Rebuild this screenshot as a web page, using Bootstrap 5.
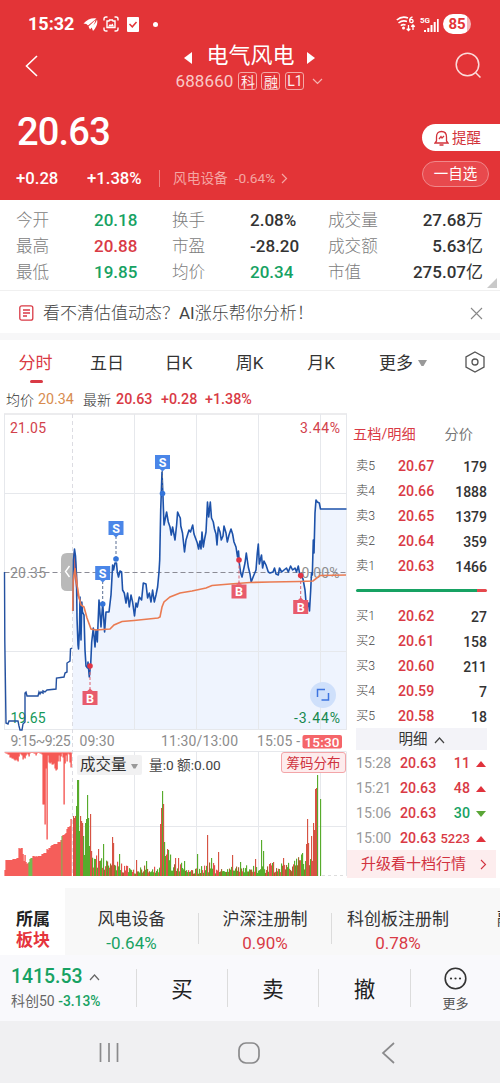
<!DOCTYPE html>
<html lang="zh-CN">
<head>
<meta charset="utf-8">
<meta name="viewport" content="width=device-width, initial-scale=1">
<title>电气风电 688660</title>
<link href="https://cdn.jsdelivr.net/npm/bootstrap@5.3.0/dist/css/bootstrap.min.css" rel="stylesheet">
<style>
:root{--up:#d93a45;--down:#17a263;--brand:#e33437}
body{font-family:Roboto,"Noto Sans CJK SC",sans-serif;color:#333;width:500px;height:1083px;overflow:hidden;background:#fff;line-height:1}
svg{display:block;flex:none}
.up{color:var(--up)}.down{color:var(--down)}
.fw5{font-weight:500}
.cjk{font-weight:400}
.nowrap{white-space:nowrap}
.hero{background:var(--brand);height:200px;color:#fff}
.statusbar{height:40px;padding:8px 28px 0}
.clock{font-size:18px;font-weight:700;width:46px}
.battery{color:var(--brand);border-radius:10px;width:28px;height:20px;font-size:15px;font-weight:700;background:linear-gradient(90deg,#fff 84%,#f5b5b6 84%)}
.titlebar{height:58px}
.stockname{font-size:22px;line-height:24px;height:25px}
.stockname span{padding-top:1px}
.code{font-size:17px;line-height:22px;height:22px;color:#f9c9c6;letter-spacing:.1px}
.tagbox{border:1px solid #f3a9a6;border-radius:3px;width:19px;height:18px;font-size:14px;padding-top:2px;color:#fdeeee}
.price{font-size:38px;font-weight:500;letter-spacing:-.8px;height:63px}
.change{padding-left:16px;height:26px;font-size:16.7px}
.change>span{padding-top:10px}
.change .parent{margin-left:13px;font-size:13.7px;color:#f4a6a3}
.change .divider{width:1px;height:17px;background:#ee8081;margin-top:9px;padding:0}
.pill-remind{background:#fff;color:#d2323a;width:78px;height:27px;border-radius:14px 0 0 14px;font-size:14.5px;margin-top:13px;padding-left:12px}
.change .pill-fav{border:1px solid #f0888a;background:#e8494d;width:67px;height:26px;border-radius:13px;font-size:14.5px;margin-right:11px;padding-top:2px}
.stats{height:91px;padding:7px 17px 0 16px;font-size:16.6px;border-bottom:1px solid #f0f0f0;position:relative}
.statrow{height:26px}
.statrow>*{width:78px}
.statrow>:last-child{width:auto}
.statrow>:nth-child(odd){color:#7c7c7c;font-weight:300;padding-top:2px}
.statrow>:nth-child(even){font-weight:500;font-size:17px}
.notice{height:42px;padding:2px 17px 0 19px;font-size:17px;font-weight:300;color:#444}
.tabs{height:47px;font-size:17px}
.tabs>div{height:44px;position:relative;padding-top:2px}
.tabs .active{color:var(--up)}
.tabs .active::after{content:"";position:absolute;left:50%;margin-left:-6px;bottom:1px;width:13px;height:3px;border-radius:2px;background:#d93a45}
.summary{height:25px;margin-bottom:1px;font-size:14.3px;padding-left:6px}
.avg{color:#d88c50}
.main{height:475px}
.chartwrap{width:347px;height:464px;position:relative}
.volsel{position:absolute;left:77px;top:342px;width:65px;height:20px;background:#f1f1f2;border-radius:2px;font-size:15.5px;padding:2px 0 0 3px}
.volinfo{position:absolute;left:149px;top:343px;font-size:13.7px;line-height:18px;color:#444}
.chips{position:absolute;left:281px;top:339px;width:65px;height:21px;border:1px solid #f3a5a8;border-radius:3px;background:#fdeced;color:#cf3340;font-size:13.5px;padding-top:2px}
.book{width:149px}
.bookhead{height:41px;font-size:14.2px;padding:2px 23px 0 6px}
.level{height:25px;padding:0 9px}
.level .lab{width:42px;font-size:12.3px;color:#444;font-weight:300}
.level .quote{font-size:14.2px;font-weight:500;color:var(--up)}
.level .qty{margin-left:auto;font-size:14px;font-weight:500}
.balance{height:25px;padding:0 9px 2px}
.balance div{height:3px;border-radius:2px;background:linear-gradient(90deg,#17a263 92%,#e5484d 92%)}
.detailhead{height:22px;margin:-1px 9px 0;padding-top:2px;background:#f3f3f8;font-size:14.5px}
.tick{height:25px;padding:2px 0 0 9px;font-size:14.2px}
.tick .t{color:#999;width:44px}
.tick .p{width:37px;font-weight:500;color:var(--up)}
.tick .q{font-weight:500;width:33px;text-align:right}
.upgrade{height:28px;background:#fdedee;color:#d2323f;font-size:15px;padding:1px 9px 0 14px}
.sectors{height:67px;background:#f8f8f8}
.sectors>*{flex:none}
.sectitle{width:65px;background:#fff;font-size:17px;font-weight:700;line-height:21px;padding:21px 0 0 16px;color:#222}
.sector{font-size:17px;line-height:24px;padding-top:19px}
.vline{width:1px;background:#dcdcdc;height:38px}
.sectors .vline{height:31px;margin-top:25px}
.trade{height:66px;background:#f9f9fc}
.tradebtn{font-size:21.5px;color:#222;padding-top:4px}
.sysnav{height:62px;background:#f0f0f2}
</style>
</head>
<body>
<header class="hero">
  <div class="statusbar d-flex align-items-start">
    <div class="d-flex align-items-center" style="height:32px">
      <span class="clock">15:32</span>
      <svg style="margin-left:9px" width="15" height="15" viewBox="0 0 15 15" fill="#fff"><path d="M.5 6.500Q6 .5 13.500 1.500L5 8.500Q4 6.500 .5 6.500zM14 2.500Q15.500 8 10 14L8.500 10Q13 6 14 2.500zM12.500 3Q12 7 7 12.500L5.500 9.500z"/></svg>
      <svg style="margin-left:5px" width="16" height="16" viewBox="0 0 16 16" fill="none" stroke="#fff" stroke-width="1.400"><path d="M1 4.500V3Q1 1 3 1H4.500M11.500 1H13Q15 1 15 3V4.500M15 11.500V13Q15 15 13 15H11.500M4.500 15H3Q1 15 1 13V11.500M4 5H6L6.500 4H9.500L10 5H12V11.500H4z"/><path d="M5 10.500L7 8L8 9L9.500 7.500L11 10.500z" fill="#fff" stroke="none"/></svg>
      <svg style="margin-left:8px" width="12" height="15" viewBox="0 0 12 15"><rect width="12" height="15" rx="1" fill="#fff"/><path d="M2.500 7L5.300 9.800L9.500 5" fill="none" stroke="#e33437" stroke-width="1.500"/></svg>
      <svg style="margin-left:14px" width="5" height="5"><circle cx="2.500" cy="2.500" r="2.500" fill="#fff"/></svg>
    </div>
    <div class="d-flex align-items-center ms-auto" style="height:32px">
      <svg width="20" height="16" viewBox="0 0 20 16" fill="none" stroke="#fff" stroke-width="1.600"><path d="M.8 4Q6 -.5 12 2M2.500 7Q6.500 3.800 11 5.500M4.800 9.700Q7 8 9.500 9"/><circle cx="7.500" cy="12" r=".7" fill="#fff"/><path stroke-width="1.300" d="M12.500 9V14.500M10.700 12.700L12.500 14.500L14.300 12.700M17 14V9M15.200 10.800L17 9L18.800 10.800M16.500 .8Q13.500 2 13.700 4.500"/><circle cx="15.400" cy="5" r="1.700" stroke-width="1.300"/></svg>
      <svg style="margin-left:4px" width="19" height="17" viewBox="0 0 19 17" fill="#fff"><text x="0" y="7" font-size="8" font-weight="700" textLength="10" lengthAdjust="spacingAndGlyphs">5G</text><path d="M4 14h2v2H4zM7.300 12h2v4h-2zM10.500 9h2v7h-2zM13.700 6h2v10h-2zM17 3h1.700v13H17z"/></svg>
      <span class="battery d-flex align-items-center justify-content-center" style="margin-left:4px;margin-right:1px">85</span>
    </div>
  </div>
  <div class="titlebar d-flex">
    <svg style="margin:15px 0 0 25px" width="13" height="22" viewBox="0 0 13 22" fill="none" stroke="#fff" stroke-width="1.600"><path d="M12 1L1.500 11L12 21"/></svg>
    <div class="mx-auto d-flex flex-column align-items-center" style="padding:3px 0 0 6px">
      <div class="d-flex align-items-center stockname">
        <svg style="margin-top:5px" width="8" height="12" viewBox="0 0 8 12"><path d="M8 0V12L0 6z" fill="#fff"/></svg>
        <span style="margin:0 12px 0 14px">电气风电</span>
        <svg style="margin-top:5px" width="8" height="12" viewBox="0 0 8 12"><path d="M0 0V12L8 6z" fill="#fff"/></svg>
      </div>
      <div class="d-flex align-items-center code" style="margin-top:2px">
        <span>688660</span>
        <span class="tagbox d-flex align-items-center justify-content-center" style="margin-left:5px">科</span>
        <span class="tagbox d-flex align-items-center justify-content-center" style="margin-left:4px">融</span>
        <span class="tagbox d-flex align-items-center justify-content-center" style="margin-left:5px;padding:0">L1</span>
        <svg style="margin-left:8px" width="11" height="7" viewBox="0 0 11 7" fill="none" stroke="#f5b5b2" stroke-width="1.200"><path d="M1 1L5.500 5.500L10 1"/></svg>
      </div>
    </div>
    <svg style="margin:12px 18px 0 0" width="27" height="27" viewBox="0 0 27 27" fill="none" stroke="#fbdcdb" stroke-width="1.500"><circle cx="12.500" cy="12.500" r="11.300"/><path d="M20.500 20.500L25.500 25.500"/></svg>
  </div>
  <div class="d-flex justify-content-between" style="padding:13px 0 0 17px;height:63px">
    <div class="price" style="padding-top:2px">20.63</div>
    <div class="pill-remind d-flex align-items-center">
      <svg width="15" height="16" viewBox="0 0 15 16" fill="none" stroke="#d2323a" stroke-width="1.300"><path d="M2.500 11V7Q2.500 1.500 7.500 1.500T12.500 7V11L14 13H1zM5.500 15H9.500M5 9L7 6.500L8 8L10 6"/></svg>
      <span style="margin-left:3px;padding-top:3px">提醒</span>
    </div>
  </div>
  <div class="change d-flex align-items-center">
    <span class="fw5" style="width:71px">+0.28</span>
    <span class="fw5" style="width:72px">+1.38%</span>
    <span class="divider"></span>
    <span class="parent nowrap">风电设备&ensp;-0.64%</span>
    <svg style="margin:9px 0 0 6px" width="7" height="11" viewBox="0 0 7 11" fill="none" stroke="#f4a6a3" stroke-width="1.200"><path d="M1 1L5.500 5.500L1 10"/></svg>
    <span class="pill-fav d-flex align-items-center justify-content-center ms-auto">一自选</span>
  </div>
</header>

<section class="stats">
  <div class="statrow d-flex align-items-center"><span>今开</span><span class="down">20.18</span><span>换手</span><span>2.08%</span><span>成交量</span><span class="ms-auto">27.68<span class="cjk">万</span></span></div>
  <div class="statrow d-flex align-items-center"><span>最高</span><span class="up">20.88</span><span>市盈</span><span>-28.20</span><span>成交额</span><span class="ms-auto">5.63<span class="cjk">亿</span></span></div>
  <div class="statrow d-flex align-items-center"><span>最低</span><span class="down">19.85</span><span>均价</span><span class="down">20.34</span><span>市值</span><span class="ms-auto">275.07<span class="cjk">亿</span></span></div>
  <svg class="position-absolute" style="right:3px;bottom:2px" width="10" height="10"><path d="M10 0V10H0z" fill="#c9c9c9"/></svg>
</section>
<section class="notice d-flex align-items-center">
  <svg width="15" height="16" viewBox="0 0 15 16" fill="none" stroke="#d93a45" stroke-width="1.300"><rect x=".8" y=".8" width="13" height="14.400" rx="2"/><path d="M4 5H11M4 8H11M4 11H8"/></svg>
  <span style="margin-left:9px;padding-top:1px">看不清估值动态？<span class="cjk">AI</span>涨乐帮你分析！</span>
  <svg class="ms-auto" width="13" height="13" viewBox="0 0 13 13" stroke="#888" stroke-width="1.100"><path d="M1 1L12 12M12 1L1 12"/></svg>
</section>
<div style="height:7px;background:#f7f7f8"></div>
<nav class="tabs d-flex">
  <div class="active d-flex align-items-center justify-content-center" style="width:71px">分时</div>
  <div class="d-flex align-items-center justify-content-center" style="width:72px">五日</div>
  <div class="d-flex align-items-center justify-content-center" style="width:71px">日K</div>
  <div class="d-flex align-items-center justify-content-center" style="width:71px">周K</div>
  <div class="d-flex align-items-center justify-content-center" style="width:72px">月K</div>
  <div class="d-flex align-items-center" style="padding-left:22px;width:108px">更多<svg style="margin-left:5px" width="9" height="7"><path d="M0 0H9L5.500 6H3.500z" fill="#999"/></svg></div>
  <div class="d-flex align-items-center" style="padding:0"><svg width="20" height="22" viewBox="0 0 20 22" fill="none" stroke="#555" stroke-width="1.300"><path d="M10 1L19 6V16L10 21L1 16V6z"/><circle cx="10" cy="11" r="3"/></svg></div>
</nav>
<div class="summary d-flex align-items-center nowrap">
  <span style="width:32px;font-size:14px;font-weight:300">均价</span><span class="avg" style="width:45px">20.34</span><span style="width:33px;font-size:14px;font-weight:300">最新</span><span class="up fw5" style="width:45px">20.63</span><span class="up fw5" style="width:44px">+0.28</span><span class="up fw5">+1.38%</span>
</div>

<main class="main d-flex">
  <div class="chartwrap">
    <svg id="chart" width="347" height="464" viewBox="0 413 347 464"></svg>
    <div class="volsel d-flex align-items-center">成交量<svg style="margin-left:4px" width="7" height="5"><path d="M0 0H7L4.500 4.500H2.500z" fill="#999"/></svg></div>
    <div class="volinfo">量:0 额:0.00</div>
    <div class="chips d-flex align-items-center justify-content-center">筹码分布</div>
  </div>
  <aside class="book d-flex flex-column">
    <div class="bookhead d-flex align-items-center justify-content-between"><span class="up">五档/明细</span><span style="color:#777">分价</span></div>
    <div id="asks"></div>
    <div class="balance d-flex align-items-center"><div class="w-100"></div></div>
    <div id="bids"></div>
    <div class="detailhead d-flex align-items-center justify-content-center">明细<svg style="margin-left:6px" width="11" height="7" viewBox="0 0 11 7" fill="none" stroke="#444" stroke-width="1.200"><path d="M1 6L5.500 1L10 6"/></svg></div>
    <div id="ticks"></div>
    <div class="upgrade d-flex align-items-center">升级看十档行情<svg class="ms-auto" width="7" height="11" viewBox="0 0 7 11" fill="none" stroke="#d2323f" stroke-width="1.100"><path d="M1 1L5.500 5.500L1 10"/></svg></div>
  </aside>
</main>

<section class="sectors d-flex overflow-hidden nowrap">
  <div class="sectitle">所属<br><span style="color:#e5343c">板块</span></div>
  <div class="sector text-center" style="width:133px">风电设备<br><span class="down">-0.64%</span></div>
  <div class="vline"></div>
  <div class="sector text-center" style="width:132px">沪深注册制<br><span class="up">0.90%</span></div>
  <div class="vline"></div>
  <div class="sector text-center" style="width:132px">科创板注册制<br><span class="up">0.78%</span></div>
  <div class="sector" style="padding-left:33px">融</div>
</section>
<section class="trade d-flex align-items-center">
  <div style="width:136px;padding-left:11px" class="nowrap">
    <div class="d-flex align-items-center down fw5" style="font-size:19.400px;height:26px">1415.53<svg style="margin-left:6px" width="11" height="7" viewBox="0 0 11 7" fill="none" stroke="#666" stroke-width="1.200"><path d="M1 6L5.500 1L10 6"/></svg></div>
    <div style="font-size:14px;height:22px;line-height:22px;color:#666">科创50 <span class="down fw5" style="font-size:13.800px">-3.13%</span></div>
  </div>
  <div class="vline"></div><div class="tradebtn text-center" style="width:90px">买</div>
  <div class="vline"></div><div class="tradebtn text-center" style="width:90px">卖</div>
  <div class="vline"></div><div class="tradebtn text-center" style="width:91px">撤</div>
  <div class="vline"></div>
  <div class="d-flex flex-column align-items-center flex-fill">
    <svg width="23" height="23" viewBox="0 0 23 23"><circle cx="11.500" cy="11.500" r="10.300" fill="none" stroke="#333" stroke-width="1.600"/><g fill="#333"><circle cx="7" cy="11.500" r="1.100"/><circle cx="11.500" cy="11.500" r="1.100"/><circle cx="16" cy="11.500" r="1.100"/></g></svg>
    <span style="font-size:13px;color:#555;margin-top:7px">更多</span>
  </div>
</section>
<footer class="sysnav d-flex align-items-center justify-content-between" style="padding:1px 105px 0 99px">
  <svg width="20" height="21" stroke="#8a8a8c" stroke-width="1.700"><path d="M1.500 1V20M10 1V20M18.500 1V20"/></svg>
  <svg width="22" height="22" fill="none" stroke="#8a8a8c" stroke-width="1.700" style="margin-right:2px"><rect x="1" y="1" width="20" height="20" rx="7"/></svg>
  <svg width="14" height="22" fill="none" stroke="#8a8a8c" stroke-width="1.700"><path d="M13 1L2 11L13 21"/></svg>
</footer>

<script src="https://cdn.jsdelivr.net/npm/bootstrap@5.3.0/dist/js/bootstrap.bundle.min.js"></script>
<script>
const byId = id => document.getElementById(id);
const level = ([l, p, q]) => `<div class="level d-flex align-items-center"><span class="lab">${l}</span><span class="quote">${p}</span><span class="qty">${q}</span></div>`;
byId('asks').innerHTML = [['卖5','20.67',179],['卖4','20.66',1888],['卖3','20.65',1379],['卖2','20.64',359],['卖1','20.63',1466]].map(level).join('');
byId('bids').innerHTML = [['买1','20.62',27],['买2','20.61',158],['买3','20.60',211],['买4','20.59',7],['买5','20.58',18]].map(level).join('');
byId('ticks').innerHTML = [['15:28',11,1],['15:21',48,1],['15:06',30,0],['15:00',5223,1]].map(([t, q, u]) =>
  `<div class="tick d-flex align-items-center"><span class="t">${t}</span><span class="p">20.63</span><span class="q ${u ? 'up' : 'down'}"${q > 999 ? ' style="font-size:13px"' : ''}>${q}</span><svg style="margin-left:6px" width="10" height="6"><path d="${u ? 'M0 6L5 0L10 6z' : 'M0 0H10L5 6z'}" fill="${u ? '#e0323c' : '#5aa637'}"/></svg></div>`).join('');

// Call auction line, then the continuous session
const auction = '4.5,572 4.8,640 6,723 8,724 9,721 18,721 19,726 20,730 22,730 23,724 25,722 25,693 26,692 27,696 38,696 39,692 40,694 41,692 43,693 43,691 45,692 47,690 56,689 56.5,678 64,677 65,673 67,672 67,663 70,661 70.5,649 72,648';
const session = '73,611 73.5,560 74.5,549 75.5,556 76.5,575 77,618 78,645 78.5,649 79.5,630 80,597 80.5,610 81,640 81.8,602 82.5,612 84,615 85,650 86,666 87.5,668 88,662 89.3,677 90.7,664 91.7,642 93.3,628 95,647 96,630 97.3,642 99,600 101,627 102.7,603 104.6,632 106,612 109,612 111,595 112,577 112.6,565 113.5,570 115,563 116.5,563 117.3,572 118.5,577 120,571 121.6,572 122.6,590 124.3,593 126,603 127.6,593 129.3,607 131,595 132.6,602 134.5,616 136,603 137.3,607 139.3,597 141.6,600 143.3,583 146,584 147.6,598 149.3,593 151,602 152.6,590 154.3,602 156,595 157.6,587 159,572 159.7,560 160.7,510 162,472 163,497 164,525 165.6,517 166.6,512 168.3,522 170,527 171.3,535 172.6,527 175,540 176.6,525 177.6,512 179.3,516 180.3,518 180.8,526 182.5,533 184.5,552 186,540 189,530 190.5,532 192.7,525 194,534 197.3,543 198.6,549 200,541 201,549 202,532 203.3,547 204.6,539 206,532 207.5,502 208.7,517 210.3,502 211.5,518 213.3,522 214.5,529 216,534 217,545 218.3,527 220,532 221.3,540 223,536 224,526 226,533 227.3,542 229,535 231,529 232.6,534 234,542 236,547 237.5,557 238.5,551 239.3,563 240.7,573 242,577 243.5,570 245,563 246.3,553 248.3,567 250,574 251.2,582 253.5,576 256,570 257.3,553 258.3,544 259.3,564 261.5,555 262.6,568 264,561 266,565 268.3,572 270,573 273,572 274.5,568 276,574 278.3,575 279.5,568 281.7,572 284,570 286.5,568 288.3,572 290.6,566 292.6,570 295,568 296.5,572 298.3,566 299.5,573 303,579 305,590 306.5,608 308.5,603 309.5,611 310.7,590 311.5,573 312.3,575 313.3,540 314,553 315,513 316,500 317.3,502 319.3,503 320.5,509 346.5,509';
const average = '72.7,611 73.2,580 75,568 77,585 79,597 81,605 84,607 87,618 91,629 96,630 110,629 114,625 122,621.5 134,620.5 158,618 160,617 162,607 164,602 170,597 180,593 192,591 206,588 212,585.5 230,584 250,582.5 270,582 300,581.5 313,581 320,575.5 346,575';
const line = (x1, y1, x2, y2, extra = 'stroke="#e6e8ec"') => `<path d="M${x1} ${y1}L${x2} ${y2}" fill="none" ${extra}/>`;
const label = (x, y, s, w, fill, size = 14, extra = '') => `<text x="${x}" y="${y}" font-size="${size}" textLength="${w}" fill="${fill}" ${extra}>${s}</text>`;
let out = `<polygon points="${session} 346.5,729.5 72.5,729.5" fill="#eff4fe"/>`;
out += line(4, 414, 347, 414, 'stroke="#e6e6e8" stroke-width="1.5"');
for (const y of [493.5, 651.5, 729.5, 826.5]) out += line(y > 800 ? 73 : 4.5, y, 346.5, y);
out += line(4.5, 414, 4.5, 730) + line(4.5, 751.5, 346.5, 751.5);
for (const x of [134.5, 196.5, 258.5, 320.5, 346.5]) out += line(x, 414, x, 730) + line(x, 752, x, 876);
out += line(72.5, 414, 72.5, 876, 'stroke="#dcdce2" stroke-dasharray="4 3"');
out += line(4.5, 572.5, 346.5, 572.5, 'stroke="#8b8b95" stroke-dasharray="5 3"');
out += `<path d="M73 553H67Q61 553 61 559V585Q61 591 67 591H73z" fill="#b9b9b9"/><path d="M69.500 566L65.500 571.500L69.500 577" fill="none" stroke="#fff" stroke-width="1.400"/>`;
out += label(10, 432.5, '21.05', 36, '#d2414b') + label(10, 578, '20.35', 36, '#8d8d8d') + label(10.500, 723.300, '19.65', 35, '#16985a');
out += label(300, 432.5, '3.44%', 40, '#d2414b') + label(294, 723.300, '-3.44%', 46, '#16884f') + label(301.500, 578, '0.00%', 38, '#8d8d8d');
out += `<path d="M73 552L76 560L79 600L77 595L74 575L73 611z" fill="#f0715a"/>`;
out += `<polyline points="${auction}" fill="none" stroke="#2451a0" stroke-width="1.400"/><polyline points="${session}" fill="none" stroke="#1d52aa" stroke-width="1.600" stroke-linejoin="round"/><polyline points="${average}" fill="none" stroke="#ea7b52" stroke-width="1.600"/>`;
// Trade markers: type, x, tag centre y, traded price y
for (const [t, x, y, d] of [['S',162.5,462,493.5],['S',116,528,559],['S',102.7,573,604],['B',90,698,666],['B',239,591.5,560],['B',300.700,607,575.5]]) {
  const c = t === 'S' ? '#4a86e8' : '#e85b6c', s = t === 'S' ? 1 : -1;
  out += line(x, y + 8 * s, x, d, `stroke="${t === 'S' ? '#5a6f93' : '#dc6370'}" stroke-dasharray="3 2"`);
  out += `<circle cx="${x}" cy="${d}" r="2.800" fill="${t === 'S' ? '#3475da' : '#e13545'}"/><rect x="${x - 7.5}" y="${y - 7}" width="15" height="14" fill="${c}"/><path d="M${x - 3} ${y + 6.8 * s}H${x + 3}L${x} ${y + 9.5 * s}z" fill="${c}"/><text x="${x}" y="${y + 4.5}" text-anchor="middle" font-size="12.500" font-weight="700" fill="#fff">${t}</text>`;
}
out += `<circle cx="323" cy="695" r="13" fill="#cfe0fb"/><path d="M317.500 697V689.500H325M328.500 693V700H321.500" fill="none" stroke="#3e74e0" stroke-width="1.500"/>`;
out += label(10.5, 746.3, '9:15~9:25', 60, '#8c8c8c') + label(79.5, 746.3, '09:30', 35, '#8c8c8c') + label(161, 746.3, '11:30/13:00', 77, '#8c8c8c') + label(257, 746.3, '15:05 -', 43, '#8c8c8c');
out += `<rect x="302.500" y="735" width="39.500" height="13.500" rx="2" fill="#f56569"/>` + label(304.500, 746.500, '15:30', 35, '#fff', 13.500, 'font-weight="500"');

// Volume: bars for the auction rise from the base and hang from the top
const red = '#f33d38', green = '#57ab2c', base = 876;
const bar = (x, h, c, w = 1.15) => `<rect x="${x}" y="${base - h}" width="${w}" height="${h}" fill="${c}"/>`;
[6,16,16,16,16,16,16,16,17,17,17,17,18,18,28,27,28,28,22,15,21,14,12,13,14,17,18,18,20,20,19,20,19,20,20,20,20,22,22,23,23,23,27,26,28,28,30,31,31,32,32,32,32,34,34,34,36,40,41,41,42,43,47,49,49,50,57].forEach((h, i) => out += bar(4.5 + i, h, i >= 24 && i < 28 || i === 57 ? green : red));
[0.5,1,1,2,2,5,5,6,6,7,8,7,8,9,4,1,2,3,7,5,6,3,1,2,4,1,0.5,0.5,0.5,1,1,3,1,0.5,0.5,1,1,2,52,52,72,16,87,3,10,11,10,12,12,11,16,18,17,9,3,9,4,1,5,52,11,3,9,1,2,10,15].forEach((h, i) => out += `<rect x="${4.5 + i}" y="752.500" width="1.200" height="${h}" fill="${red}"/>`);

// Envelope of session volume and the individual spikes above it
const spikes = {73:[60,0],74:[58,0],75:[60,0],76:[70,1],77:[96,1],78:[96,1],79:[45,1],80:[60,0],81:[55,0],82:[53,0],83:[40,1],84:[21,1],85:[53,1],86:[57,1],87:[81,1],88:[58,1],89:[30,1],90:[62,0],91:[25,0],95:[17,1],98:[27,0],99:[15,0],103:[32,1],112:[39,0],113:[33,0],119:[22,1],136:[16,0],146:[15,1],160:[52,0],161:[68,0],162:[85,1],163:[72,0],164:[34,1],165:[20,1],167:[27,0],168:[26,1],175:[18,0],178:[18,0],184:[15,1],197:[22,1],207:[41,0],211:[18,1],218:[24,0],232:[21,0],240:[14,1],255:[17,0],261:[36,1],263:[25,1],273:[14,0],283:[18,0],302:[23,1],306:[32,0],307:[57,0],308:[33,0],311:[40,0],313:[53,0],314:[46,0],315:[87,0],316:[88,0],317:[101,1],320:[77,1]};
const envelope = [[73,45],[91,26],[103,17],[120,14],[135,7],[147,14],[158,7],[164,25],[180,16],[192,6],[212,15],[218,6],[240,13],[258,9],[268,13],[290,14],[303,24],[311,25],[318,45]];
const ceiling = x => { for (let i = 1; i < envelope.length; i++) if (x <= envelope[i][0]) { const [a, b] = envelope[i - 1], [c, d] = envelope[i]; return b + (d - b) * (x - a) / (c - a); } return 0; };
let seed = 41;
const rnd = () => (seed = (seed * 16807) % 2147483647) / 2147483647;
for (let x = 73; x <= 320; x++) {
  const r = rnd(), g = rnd(), s = spikes[x];
  if (!s && x > 317) continue;
  out += s ? bar(x, s[0], s[1] ? green : '#d65343') : bar(x, ceiling(x) * (.25 + .75 * r), g > .52 ? green : g > .25 ? '#e3504b' : '#a3642c');
}
out += line(322, 875.5, 346, 875.5, 'stroke="#ddd" stroke-dasharray="3 3"');
byId('chart').innerHTML = out;
</script>
</body>
</html>
